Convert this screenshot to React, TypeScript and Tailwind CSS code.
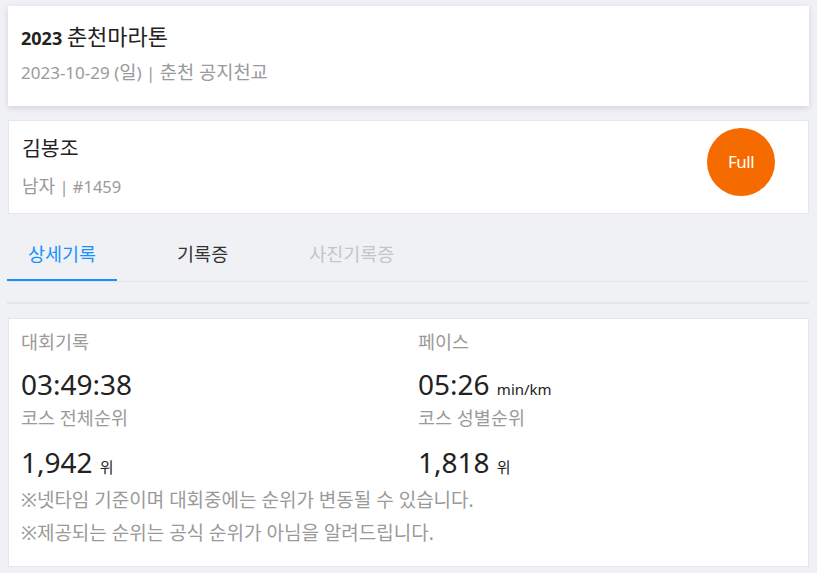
export default function App() {
  return (
    <div
      className="min-h-[573px] w-full bg-[#f0f1f5] px-[8px] pt-[6px] pb-[6px] text-[#222]"
      style={{ fontFamily: '"Noto Sans", "Noto Sans CJK KR", sans-serif' }}
    >
      {/* Race header */}
      <div className="h-[100px] bg-white px-[13px] pt-[18px] shadow-[0_2px_6px_rgba(0,0,0,0.12)]">
        <div className="text-[18px] leading-[28px]">
          <span className="font-bold">2023</span> <span className="text-[22px] leading-none">춘천마라톤</span>
        </div>
        <div className="mt-[9px] text-[17px] leading-[24px] text-[#9a9a9a]">
          2023-10-29 (<span className="text-[18.7px] leading-none">일</span>) |{" "}
          <span className="text-[18.7px] leading-none">춘천 공지천교</span>
        </div>
      </div>

      {/* Runner */}
      <div className="mt-[14px] flex h-[94px] items-start justify-between border border-[#e6e7eb] bg-white pl-[13px] pr-[33px]">
        <div className="pt-[13px]">
          <div className="text-[20.5px] leading-[28px]">김봉조</div>
          <div className="mt-[13px] text-[16.5px] leading-[24px] text-[#9a9a9a]">
            <span className="text-[18px] leading-none">남자</span> | #1459
          </div>
        </div>
        <div className="mt-[7px] flex h-[68px] w-[68px] items-center justify-center rounded-full bg-[#f56b00] text-[17px] tracking-[-0.5px] text-white">
          Full
        </div>
      </div>

      {/* Tabs */}
      <div className="mt-[18px] -ml-[1px] flex border-b border-[#e4e5ea]">
        <div className="border-b-2 border-[#1890ff] px-[21px] pt-[9px] pb-[12px] text-[18.5px] leading-[26px] text-[#1890ff]">
          상세기록
        </div>
        <div className="ml-[39px] border-b-2 border-transparent px-[21px] pt-[9px] pb-[12px] text-[18.5px] leading-[26px] text-[#333]">
          기록증
        </div>
        <div className="ml-[39px] border-b-2 border-transparent px-[21px] pt-[9px] pb-[12px] text-[18.5px] leading-[26px] text-[#c4c5c9]">
          사진기록증
        </div>
      </div>
      <div className="mt-[20px] -ml-[1px] h-[2px] bg-[#e4e5ea]" />

      {/* Record detail */}
      <div className="mt-[14px] h-[249px] border border-[#e6e7eb] bg-white px-[12px] pt-[11px]">
        <div className="grid grid-cols-[397px_1fr]">
          <div>
            <div className="text-[18.5px] leading-[24px] text-[#9a9a9a]">대회기록</div>
            <div className="mt-[12px] text-[28px] leading-[36px] text-[#222]">03:49:38</div>
            <div className="mt-[4px] text-[18.5px] leading-[24px] text-[#9a9a9a]">코스 전체순위</div>
            <div className="mt-[14px] text-[28px] leading-[36px] text-[#222]">
              1,942 <span className="text-[15px] leading-none">위</span>
            </div>
          </div>
          <div>
            <div className="text-[18.5px] leading-[24px] text-[#9a9a9a]">페이스</div>
            <div className="mt-[12px] text-[28px] leading-[36px] text-[#222]">
              05:26 <span className="text-[15px] leading-none">min/km</span>
            </div>
            <div className="mt-[4px] text-[18.5px] leading-[24px] text-[#9a9a9a]">코스 성별순위</div>
            <div className="mt-[14px] text-[28px] leading-[36px] text-[#222]">
              1,818 <span className="text-[15px] leading-none">위</span>
            </div>
          </div>
        </div>
        <div className="mt-[4px] text-[19px] leading-[33px] text-[#9a9a9a]">
          <div>※넷타임 기준이며 대회중에는 순위가 변동될 수 있습니다.</div>
          <div>※제공되는 순위는 공식 순위가 아님을 알려드립니다.</div>
        </div>
      </div>
    </div>
  );
}
